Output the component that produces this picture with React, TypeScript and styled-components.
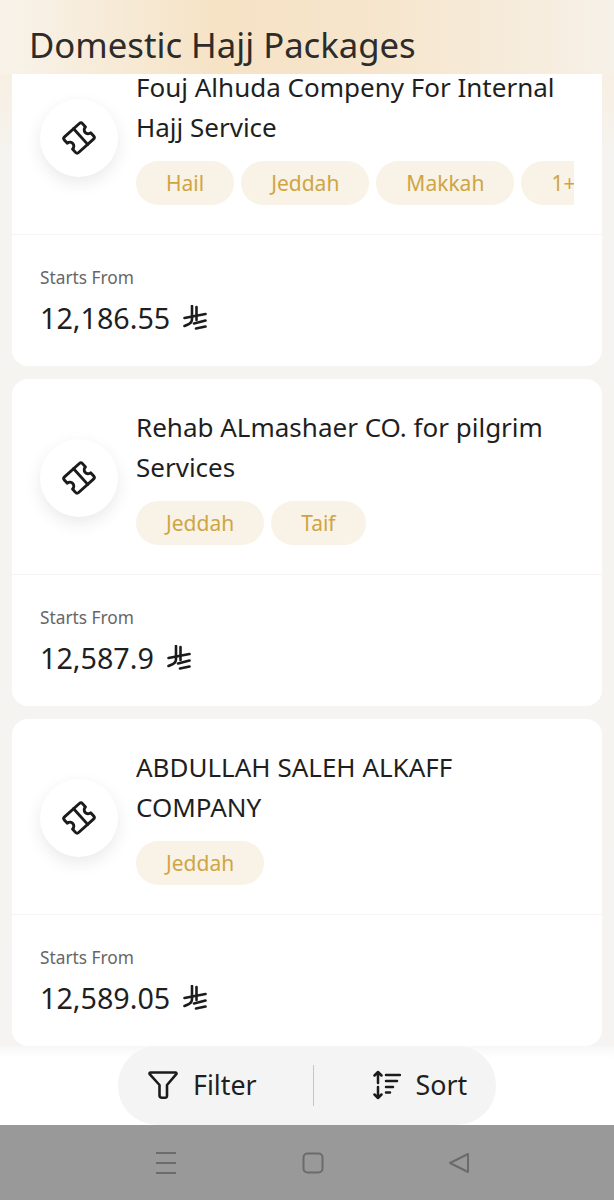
import React from 'react'
import styled, { createGlobalStyle } from 'styled-components'

const font = `'Noto Sans', 'Open Sans', sans-serif`

const data = [
  {
    name: ['Fouj Alhuda Compeny For Internal', 'Hajj Service'],
    cities: ['Hail', 'Jeddah', 'Makkah', '1+'],
    price: '12,186.55'
  },
  {
    name: ['Rehab ALmashaer CO. for pilgrim', 'Services'],
    cities: ['Jeddah', 'Taif'],
    price: '12,587.9'
  },
  {
    name: ['ABDULLAH SALEH ALKAFF', 'COMPANY'],
    cities: ['Jeddah'],
    price: '12,589.05'
  }
]

const GlobalStyle = createGlobalStyle`
  html, body {
    margin: 0;
    padding: 0;
    background: #fff;
  }
  * {
    box-sizing: border-box;
  }
`

const Page = styled('div')`
  width: 614px;
  height: 1200px;
  display: flex;
  flex-direction: column;
  overflow: hidden;
  font-family: ${font};
  background: #fff;
`

const Content = styled('div')`
  height: 1046px;
  display: flex;
  flex-direction: column;
  background: linear-gradient(180deg, #f6ecdc 0, #f7f0e5 90px, #f5f4f1 160px, #f5f4f2 100%);
`

const Header = styled('div')`
  height: 74px;
  flex: none;
  padding: 22px 0 0 29px;
  background: linear-gradient(90deg, #f8f3ea 0, #f6e3c6 35%, #f6e5cc 60%, #f6efe3 95%, #f6f1e9 100%);
`

const Title = styled('h1')`
  margin: 0;
  font-size: 34.7px;
  line-height: 46px;
  font-weight: 400;
  color: #2e2c2a;
  white-space: nowrap;
`

const List = styled('div')`
  flex: 1;
  min-height: 0;
  overflow: hidden;
  padding: 0 12px;
`

const Cards = styled('div')`
  display: flex;
  flex-direction: column;
  gap: 13px;
  margin-top: -35px;
`

const Card = styled('div')`
  height: 327px;
  flex: none;
  background: #fff;
  border-radius: 16px;
  display: flex;
  flex-direction: column;
`

const CardTop = styled('div')`
  height: 196px;
  flex: none;
  display: flex;
  align-items: center;
  gap: 18px;
  padding: 0 28px;
  border-bottom: 1px solid #f5f4f2;
`

const IconCircle = styled('div')`
  width: 78px;
  height: 78px;
  flex: none;
  margin-top: 2px;
  border-radius: 50%;
  background: #fff;
  display: flex;
  align-items: center;
  justify-content: center;
  box-shadow: 0 6px 16px rgba(60, 50, 40, 0.1);
`

const Info = styled('div')`
  flex: 1;
  min-width: 0;
`

const Name = styled('div')`
  font-size: 26px;
  line-height: 39.5px;
  color: #1f1f1f;
  white-space: nowrap;
`

const Chips = styled('div')`
  display: flex;
  gap: 7px;
  margin-top: 14px;
  overflow: hidden;
`

const Chip = styled('span')`
  flex: none;
  height: 44px;
  padding: 0 30px;
  border-radius: 22px;
  background: #f9f2e6;
  color: #cfa544;
  font-size: 21px;
  line-height: 44px;
`

const CardBottom = styled('div')`
  flex: 1;
  padding: 30px 28px 0;
`

const Starts = styled('div')`
  font-size: 17.3px;
  line-height: 26px;
  color: #666;
`

const PriceRow = styled('div')`
  display: flex;
  align-items: center;
  gap: 13px;
  margin-top: 7px;
  font-size: 28.7px;
  line-height: 40px;
  color: #1f1f1f;
`

const Footer = styled('div')`
  height: 79px;
  flex: none;
  display: flex;
  justify-content: center;
  background: linear-gradient(180deg, #f7f7f7 0, #fff 12px);
`

const Toolbar = styled('div')`
  width: 378px;
  height: 79px;
  padding-left: 30px;
  border-radius: 39px;
  background: #f4f4f4;
  display: flex;
  align-items: center;
`

const ToolButton = styled('div')`
  flex: none;
  display: flex;
  align-items: center;
  gap: 15px;
  font-size: 26.8px;
  line-height: 36px;
  color: #1f1f1f;
  margin-top: -1px;
`

const Separator = styled('div')`
  width: 1px;
  height: 41px;
  margin: 0 59px 0 56px;
  background: #c6c6c6;
`

const NavBar = styled('div')`
  flex: 1;
  background: #999;
  display: flex;
  align-items: center;
  justify-content: space-between;
  padding: 0 143px 0 154px;
`

const TicketIcon = () => (
  <svg width="40" height="40" viewBox="0 0 36 36" fill="none" stroke="#1b1b1b" strokeWidth="2.6" strokeLinejoin="round" strokeLinecap="round">
    <g transform="rotate(-42 18 18)">
      <path d="M7 10.5 a2 2 0 0 1 2-2 h18 a2 2 0 0 1 2 2 v4 a3.5 3.5 0 0 0 0 7 v4 a2 2 0 0 1-2 2 h-18 a2 2 0 0 1-2-2 v-4 a3.5 3.5 0 0 0 0-7 z" />
      <path d="M20 8.5 v19" />
    </g>
  </svg>
)

const RiyalIcon = () => (
  <svg width="24" height="26" viewBox="0 0 24 26" fill="none" stroke="#1b1b1b" strokeWidth="2.6" strokeLinecap="round">
    <path d="M9 1 V14 Q9 18 5 19.5 L1.5 21" />
    <path d="M13.5 2 V15" />
    <path d="M1.5 13 L22.5 9" />
    <path d="M11 18.5 L22.5 15.5" />
    <path d="M13 23.5 L22.5 21.5" />
  </svg>
)

const FilterIcon = () => (
  <svg width="30" height="30" viewBox="0 0 30 30" fill="none" stroke="#1b1b1b" strokeWidth="2.6" strokeLinejoin="round" strokeLinecap="round">
    <path d="M2.5 2.5 h25 a1 1 0 0 1 .8 1.6 L19 15 v11 a1.8 1.8 0 0 1-2 1.8 h-3 a2.5 2.5 0 0 1-2.5-2.5 V15 L1.7 4.1 a1 1 0 0 1 .8-1.6 z" />
  </svg>
)

const SortIcon = () => (
  <svg width="28" height="30" viewBox="0 0 28 30" fill="none" stroke="#1b1b1b" strokeWidth="2.5" strokeLinecap="round" strokeLinejoin="round">
    <path d="M5 2 v11 M1.5 5.5 L5 2 l3.5 3.5" />
    <path d="M5 17 v11 M1.5 24.5 L5 28 l3.5-3.5" />
    <path d="M13 5 h14 M13 11 h11 M13 17 h7 M13 22.5 h4" />
  </svg>
)

const App = () => {
  return (
    <Page>
      <GlobalStyle />
      <Content>
        <Header>
          <Title>Domestic Hajj Packages</Title>
        </Header>
        <List>
          <Cards>
            {data.map((item, index) => (
              <Card key={index}>
                <CardTop>
                  <IconCircle>
                    <TicketIcon />
                  </IconCircle>
                  <Info>
                    <Name>{item.name[0]}</Name>
                    <Name>{item.name[1]}</Name>
                    <Chips>
                      {item.cities.map((city, key) => (
                        <Chip key={key}>{city}</Chip>
                      ))}
                    </Chips>
                  </Info>
                </CardTop>
                <CardBottom>
                  <Starts>Starts From</Starts>
                  <PriceRow>
                    {item.price}
                    <RiyalIcon />
                  </PriceRow>
                </CardBottom>
              </Card>
            ))}
          </Cards>
        </List>
      </Content>
      <Footer>
        <Toolbar>
          <ToolButton>
            <FilterIcon />
            Filter
          </ToolButton>
          <Separator />
          <ToolButton>
            <SortIcon />
            Sort
          </ToolButton>
        </Toolbar>
      </Footer>
      <NavBar>
        <svg width="24" height="24" viewBox="0 0 24 24" fill="none" stroke="#6b6b6b" strokeWidth="2">
          <path d="M2 2 h20 M2 12 h20 M2 22 h20" />
        </svg>
        <svg width="24" height="24" viewBox="0 0 24 24" fill="none" stroke="#6b6b6b" strokeWidth="2">
          <rect x="2.5" y="2.5" width="19" height="19" rx="4" />
        </svg>
        <svg width="24" height="24" viewBox="0 0 24 24" fill="none" stroke="#6b6b6b" strokeWidth="2" strokeLinejoin="round">
          <path d="M3 12 L21 3 V21 Z" />
        </svg>
      </NavBar>
    </Page>
  )
}

export default App
